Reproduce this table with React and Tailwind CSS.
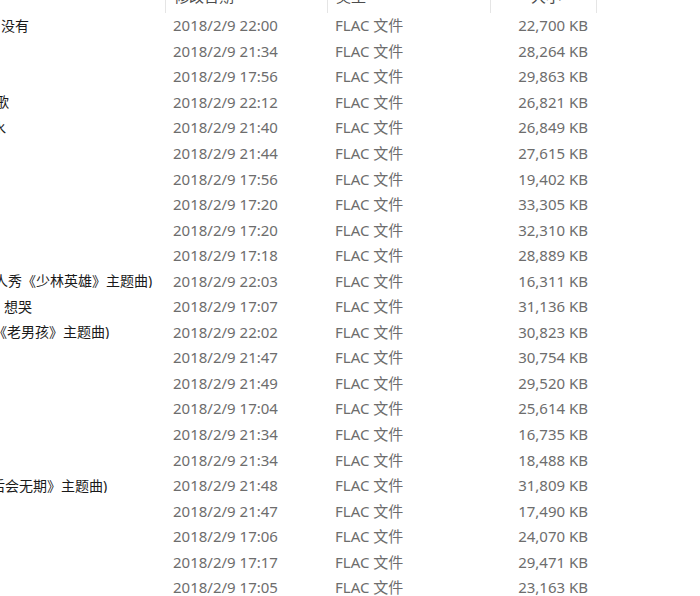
import React from "react";

const rows = [
  ["没有", 1, "22:00", "22,700"],
  ["", 0, "21:34", "28,264"],
  ["", 0, "17:56", "29,863"],
  ["歌", -5, "22:12", "26,821"],
  ["水", -8, "21:40", "26,849"],
  ["", 0, "21:44", "27,615"],
  ["", 0, "17:56", "19,402"],
  ["", 0, "17:20", "33,305"],
  ["", 0, "17:20", "32,310"],
  ["", 0, "17:18", "28,889"],
  ["人秀《少林英雄》主题曲)", -6, "22:03", "16,311"],
  ["想哭", 4, "17:07", "31,136"],
  ["《老男孩》主题曲)", -7, "22:02", "30,823"],
  ["", 0, "21:47", "30,754"],
  ["", 0, "21:49", "29,520"],
  ["", 0, "17:04", "25,614"],
  ["", 0, "21:34", "16,735"],
  ["", 0, "21:34", "18,488"],
  ["后会无期》主题曲)", -9, "21:48", "31,809"],
  ["", 0, "21:47", "17,490"],
  ["", 0, "17:06", "24,070"],
  ["", 0, "17:17", "29,471"],
  ["", 0, "17:05", "23,163"],
];

const font = {
  fontFamily: '"Noto Sans", "Noto Sans CJK SC", sans-serif',
};

export default function App() {
  return (
    <div
      className="w-[700px] h-[596px] bg-white overflow-hidden text-[15px] leading-none"
      style={font}
    >
      {/* header, mostly scrolled off the top */}
      <div className="-mt-[14px] h-[27px] flex items-stretch text-[#4c4c4c]">
        <div className="w-[165px]" />
        <div className="w-[162px] border-l border-[#e5e5e5] flex items-center pl-[8px] pb-[7px]">
          修改日期
        </div>
        <div className="w-[163px] border-l border-[#e5e5e5] flex items-center pl-[8px] pb-[7px]">
          类型
        </div>
        <div className="w-[107px] border-l border-r border-[#e5e5e5] flex items-center pl-[40px] pb-[7px]">
          大小
        </div>
      </div>
      <div className="flex flex-col">
        {rows.map(([name, off, time, size], i) => (
          <div key={i} className="h-[25.55px] flex items-center">
            <div className="w-[165px] overflow-hidden whitespace-nowrap text-[14px] text-[#1a1a1a]">
              <span className="inline-block" style={{ marginLeft: off }}>
                {name || "\u00a0"}
              </span>
            </div>
            <div className="w-[162px] pl-[8px] text-[#6d6d6d]">2018/2/9 {time}</div>
            <div className="w-[163px] pl-[8px] text-[#6d6d6d]">FLAC 文件</div>
            <div className="w-[107px] pr-[9px] text-right text-[#6d6d6d]">{size} KB</div>
          </div>
        ))}
      </div>
    </div>
  );
}
